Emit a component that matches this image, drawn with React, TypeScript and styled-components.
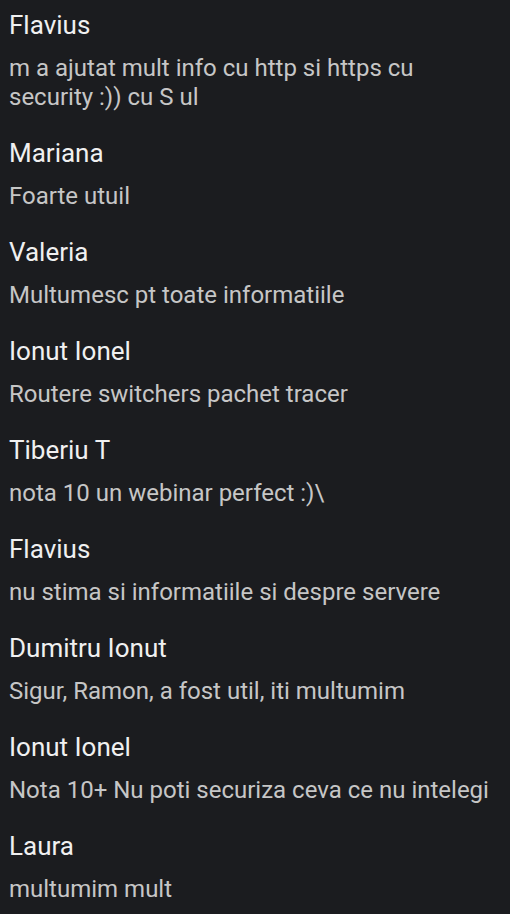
import React from 'react'
import styled, { createGlobalStyle } from 'styled-components'

const GlobalStyle = createGlobalStyle`
  html, body {
    margin: 0;
    padding: 0;
    background-color: #1b1c1f;
  }
`

const CommentList = styled.ul`
  list-style: none;
  margin: 0;
  padding: 10px 9px 0px 9px;
  display: flex;
  flex-direction: column;
  gap: 26px;
  font-family: Roboto, 'Liberation Sans', sans-serif;
  background-color: #1b1c1f;
  min-height: 914px;
  box-sizing: border-box;
`

const CommentItem = styled.li`
  display: flex;
  flex-direction: column;
  gap: 14px;
`

const Author = styled.span`
  font-size: 26px;
  line-height: 30px;
  font-weight: 400;
  color: #f0f0f0;
`

const Message = styled.p`
  margin: 0;
  font-size: 24px;
  line-height: 29px;
  font-weight: 400;
  color: #c6c6c6;
`

const comments = [
  { author: 'Flavius', text: 'm a ajutat mult info cu http si https cu security :)) cu S ul' },
  { author: 'Mariana', text: 'Foarte utuil' },
  { author: 'Valeria', text: 'Multumesc pt toate informatiile' },
  { author: 'Ionut Ionel', text: 'Routere switchers pachet tracer' },
  { author: 'Tiberiu T', text: 'nota 10 un webinar perfect :)\\' },
  { author: 'Flavius', text: 'nu stima si informatiile si despre servere' },
  { author: 'Dumitru Ionut', text: 'Sigur, Ramon, a fost util, iti multumim' },
  { author: 'Ionut Ionel', text: 'Nota 10+ Nu poti securiza ceva ce nu intelegi' },
  { author: 'Laura', text: 'multumim mult' },
]

export default function App() {
  return (
    <>
      <GlobalStyle />
      <CommentList>
        {comments.map((c, i) => (
          <CommentItem key={i}>
            <Author>{c.author}</Author>
            <Message>{c.text}</Message>
          </CommentItem>
        ))}
      </CommentList>
    </>
  )
}
